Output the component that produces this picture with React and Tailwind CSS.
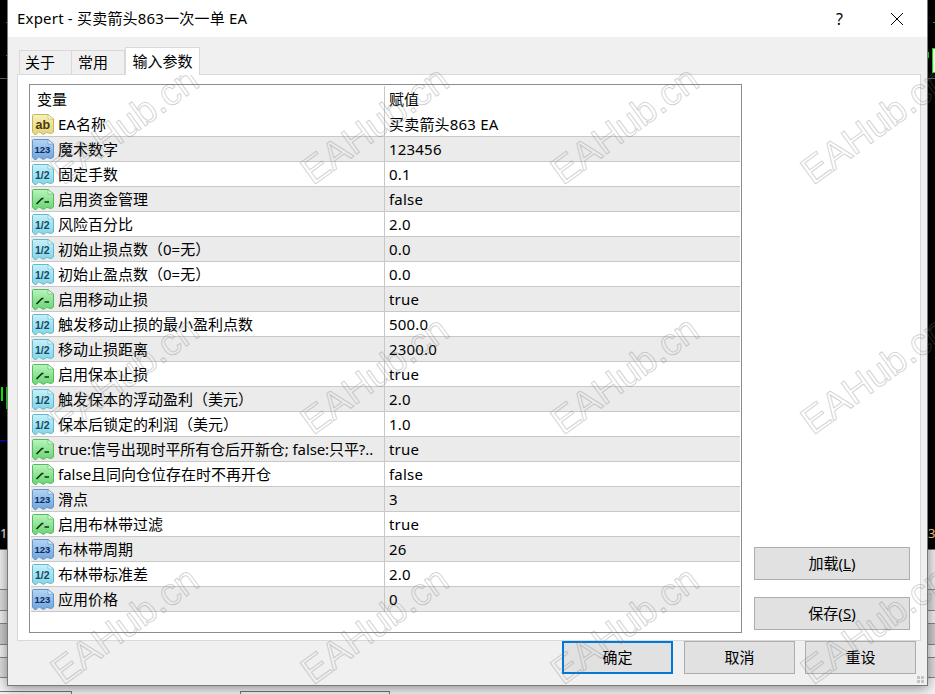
import React from 'react';

const FONT = '"Noto Sans", "Noto Sans CJK SC", sans-serif';

const PARAMS = [
  { type: 'ab', name: 'EA名称', value: '买卖箭头863 EA' },
  { type: 'int', name: '魔术数字', value: '123456' },
  { type: 'dbl', name: '固定手数', value: '0.1' },
  { type: 'bool', name: '启用资金管理', value: 'false' },
  { type: 'dbl', name: '风险百分比', value: '2.0' },
  { type: 'dbl', name: '初始止损点数（0=无）', value: '0.0' },
  { type: 'dbl', name: '初始止盈点数（0=无）', value: '0.0' },
  { type: 'bool', name: '启用移动止损', value: 'true' },
  { type: 'dbl', name: '触发移动止损的最小盈利点数', value: '500.0' },
  { type: 'dbl', name: '移动止损距离', value: '2300.0' },
  { type: 'bool', name: '启用保本止损', value: 'true' },
  { type: 'dbl', name: '触发保本的浮动盈利（美元）', value: '2.0' },
  { type: 'dbl', name: '保本后锁定的利润（美元）', value: '1.0' },
  { type: 'bool', name: 'true:信号出现时平所有仓后开新仓; false:只平?..', value: 'true', tight: true },
  { type: 'bool', name: 'false且同向仓位存在时不再开仓', value: 'false' },
  { type: 'int', name: '滑点', value: '3' },
  { type: 'bool', name: '启用布林带过滤', value: 'true' },
  { type: 'int', name: '布林带周期', value: '26' },
  { type: 'dbl', name: '布林带标准差', value: '2.0' },
  { type: 'int', name: '应用价格', value: '0' },
];

const ICON_COLORS = {
  ab: { top: '#f8f0b8', fill: '#e4d27c', edge: '#c8b65c', fold: '#fbf7d8', ink: '#4a3c08' },
  int: { top: '#b4d4f4', fill: '#6ea4dc', edge: '#5f94cc', fold: '#e0eefa', ink: '#0c2a60' },
  dbl: { top: '#c8f0f8', fill: '#84d4e6', edge: '#62b8cc', fold: '#e4f8fc', ink: '#104a66' },
  bool: { top: '#b8f4bc', fill: '#68d472', edge: '#58b862', fold: '#e0fae2', ink: '#0a3412' },
};

function TypeIcon({ type }) {
  const c = ICON_COLORS[type];
  return (
    <svg width="22" height="21" viewBox="0 0 22 21" className="shrink-0">
      <defs>
        <linearGradient id={`icon-${type}`} x1="0" y1="0" x2="0" y2="1">
          <stop offset="0" stopColor={c.top} />
          <stop offset="1" stopColor={c.fill} />
        </linearGradient>
      </defs>
      <path
        d="M1.500 0.500H16L21.500 5V18Q19.500 20.500 17 19T13 19.500T9 19T5 19.500T0.500 18V1.500Q0.500 0.500 1.500 0.500Z"
        fill={`url(#icon-${type})`}
        stroke={c.edge}
      />
      <path d="M16 0.500V5H21.500Z" fill={c.fold} stroke={c.edge} strokeWidth="0.6" />
      {type === 'ab' && (
        <text x="3.500" y="14.500" fontSize="12.500" fontWeight="700" fontFamily="Liberation Sans" fill={c.ink}>ab</text>
      )}
      {type === 'int' && (
        <text x="2.500" y="14" fontSize="9.500" fontWeight="700" fontFamily="Liberation Sans" fill={c.ink}>123</text>
      )}
      {type === 'dbl' && (
        <text x="3" y="14.500" fontSize="10.500" fontWeight="700" fontFamily="Liberation Sans" fill={c.ink}>1/2</text>
      )}
      {type === 'bool' && (
        <path d="M4.500 15L10 9.500H11.500M12.500 13H17" fill="none" stroke={c.ink} strokeWidth="1.700" />
      )}
    </svg>
  );
}

function DialogButton({ children, primary, className = '' }) {
  return (
    <button
      className={`h-[33px] bg-[#e1e1e1] text-[15px] text-black flex items-center justify-center ${
        primary ? 'border-2 border-[#0078d7]' : 'border border-[#adadad]'
      } ${className}`}
    >
      {children}
    </button>
  );
}

function ParamRow({ row, index }) {
  return (
    <div className={`flex h-[25px] border-b border-[#c8c8c8] ${index % 2 ? 'bg-[#ebebeb]' : 'bg-white'}`}>
      <div className="w-[354px] flex items-center pl-px border-r border-[#c8c8c8] shrink-0">
        <TypeIcon type={row.type} />
        <span className={`ml-[4px] whitespace-nowrap ${row.tight ? 'tracking-[-0.09px]' : ''}`}>{row.name}</span>
      </div>
      <div className="pl-[4px] flex items-center whitespace-nowrap tracking-[0.2px]">{row.value}</div>
    </div>
  );
}

// EAHub.cn stamp repeated over the whole shot
function Watermarks() {
  const cells = Array.from({ length: 12 });
  return (
    <div className="absolute left-0 top-0 w-[1000px] h-[750px] grid grid-cols-[repeat(4,250px)] grid-rows-[repeat(3,250px)] pointer-events-none">
      {cells.map((_, i) => (
        <div key={i} className="flex items-center justify-center">
          <span className="text-[38px] leading-none whitespace-nowrap text-transparent rotate-[-36deg] [-webkit-text-stroke:1px_rgba(120,120,120,0.34)] font-['Liberation_Sans']">
            EAHub.cn
          </span>
        </div>
      ))}
    </div>
  );
}

function Backdrop() {
  return (
    <div className="absolute inset-0 flex flex-col">
      <div className="relative h-[549px] bg-black">
        <div className="absolute left-0 top-[78px] w-full h-px bg-[#5a6470]" />
        <div className="absolute left-[6px] top-[22px] w-[2px] h-px bg-[#00c000]" />
        <div className="absolute left-[6px] top-[55px] w-[2px] h-px bg-[#00c000]" />
        <div className="absolute left-[1px] top-[387px] w-[2px] h-[14px] bg-[#00ff00]" />
        <div className="absolute left-[6px] top-[387px] w-[2px] h-[22px] bg-[#00ff00]" />
        <div className="absolute left-[928px] top-[52px] w-px h-[6px] bg-[#00ff00]" />
        <div className="absolute left-[932px] top-[48px] w-[3px] h-[25px] border border-r-0 border-[#00ff00] bg-white" />
        <div className="absolute left-[933px] top-[22px] w-[2px] h-px bg-[#00c000]" />
        <div className="absolute left-0 top-[440px] w-[7px] h-px bg-[#0000ff]" />
        <span className="absolute left-0 top-[524px] text-[13px] leading-[18px] text-white">1</span>
        <span className="absolute left-[928px] top-[524px] text-[13px] leading-[18px] text-[#ffd080]">3</span>
      </div>
      <div className="h-[40px] bg-[#f0f0f0] border-t border-[#777]" />
      <div className="h-[22px] bg-[#dedede] border-y border-[#888]" />
      <div className="h-[12px] bg-[#f0f0f0]" />
      <div className="h-[22px] bg-[#cccccc] border-y border-[#888]" />
      <div className="h-[12px] bg-[#f0f0f0]" />
      <div className="h-[21px] bg-[#dedede] border-y border-[#888]" />
      <div className="flex-1 bg-[#f4f4f4] relative">
        <div className="absolute left-0 top-[13px] w-[72px] h-[3px] border-t border-r border-[#777]" />
        <div className="absolute left-[240px] top-[13px] w-[150px] h-[3px] border-t border-x border-[#777]" />
      </div>
    </div>
  );
}

export default function App() {
  return (
    <div className="relative w-[935px] h-[694px] overflow-hidden bg-black text-[15px] text-black" style={{ fontFamily: FONT }}>
      <Backdrop />

      <div className="absolute left-[7px] top-0 w-[921px] h-[686px] flex flex-col bg-[#f0f0f0] border-x border-b border-[#7a7a7a] shadow-[0_2px_12px_rgba(0,0,0,0.45)]">
        <div className="h-[37px] bg-white flex items-center shrink-0">
          <span className="ml-[9px] tracking-[0.2px]">Expert - 买卖箭头863一次一单 EA</span>
          <span className="ml-auto text-[16px]">?</span>
          <svg width="14" height="14" viewBox="0 0 14 14" className="ml-[47px] mr-[23px]">
            <path d="M1 1L13 13M13 1L1 13" stroke="#000" strokeWidth="1" />
          </svg>
        </div>

        <div className="flex items-end ml-[11px] mt-[10px] h-[27px] shrink-0">
          <div className="w-[53px] h-[24px] flex items-center pl-[5px] bg-[#f0f0f0] border border-b-0 border-[#d9d9d9]">关于</div>
          <div className="w-[53px] h-[24px] flex items-center pl-[6px] bg-[#f0f0f0] border border-b-0 border-l-0 border-[#d9d9d9]">常用</div>
          <div className="w-[75px] h-[28px] -mb-px relative z-10 flex items-center justify-center bg-white border border-b-0 border-[#d9d9d9]">输入参数</div>
        </div>

        <div className="ml-[9px] w-[904px] h-[567px] shrink-0 bg-white border border-[#d9d9d9] flex pt-[9px] pb-[7px] pl-[11px]">
          <div className="w-[713px] border border-[#8b8b90] p-px pb-0">
            <div className="flex h-[26px] bg-white">
              <div className="w-[354px] pl-[6px] flex items-center border-r border-[#c8c8c8] shrink-0">变量</div>
              <div className="pl-[4px] flex items-center">赋值</div>
            </div>
            {PARAMS.map((row, i) => (
              <ParamRow key={row.name} row={row} index={i} />
            ))}
          </div>

          <div className="ml-[12px] w-[156px] flex flex-col justify-end gap-[17px] pb-[3px]">
            <DialogButton>加载(<span className="underline">L</span>)</DialogButton>
            <DialogButton>保存(<span className="underline">S</span>)</DialogButton>
          </div>
        </div>

        <div className="flex justify-end gap-[10px] pr-[11px]">
          <DialogButton primary className="w-[111px] mr-px">确定</DialogButton>
          <DialogButton className="w-[111px]">取消</DialogButton>
          <DialogButton className="w-[111px]">重设</DialogButton>
        </div>

        <div className="absolute right-[3px] bottom-[2px] grid grid-cols-2 gap-px">
          <div className="w-[3px] h-[3px] bg-[#c4c4c4]" />
          <div className="w-[3px] h-[3px] bg-[#c4c4c4]" />
          <div className="w-[3px] h-[3px] bg-[#c4c4c4]" />
          <div className="w-[3px] h-[3px] bg-[#c4c4c4]" />
        </div>
      </div>

      <Watermarks />
    </div>
  );
}
